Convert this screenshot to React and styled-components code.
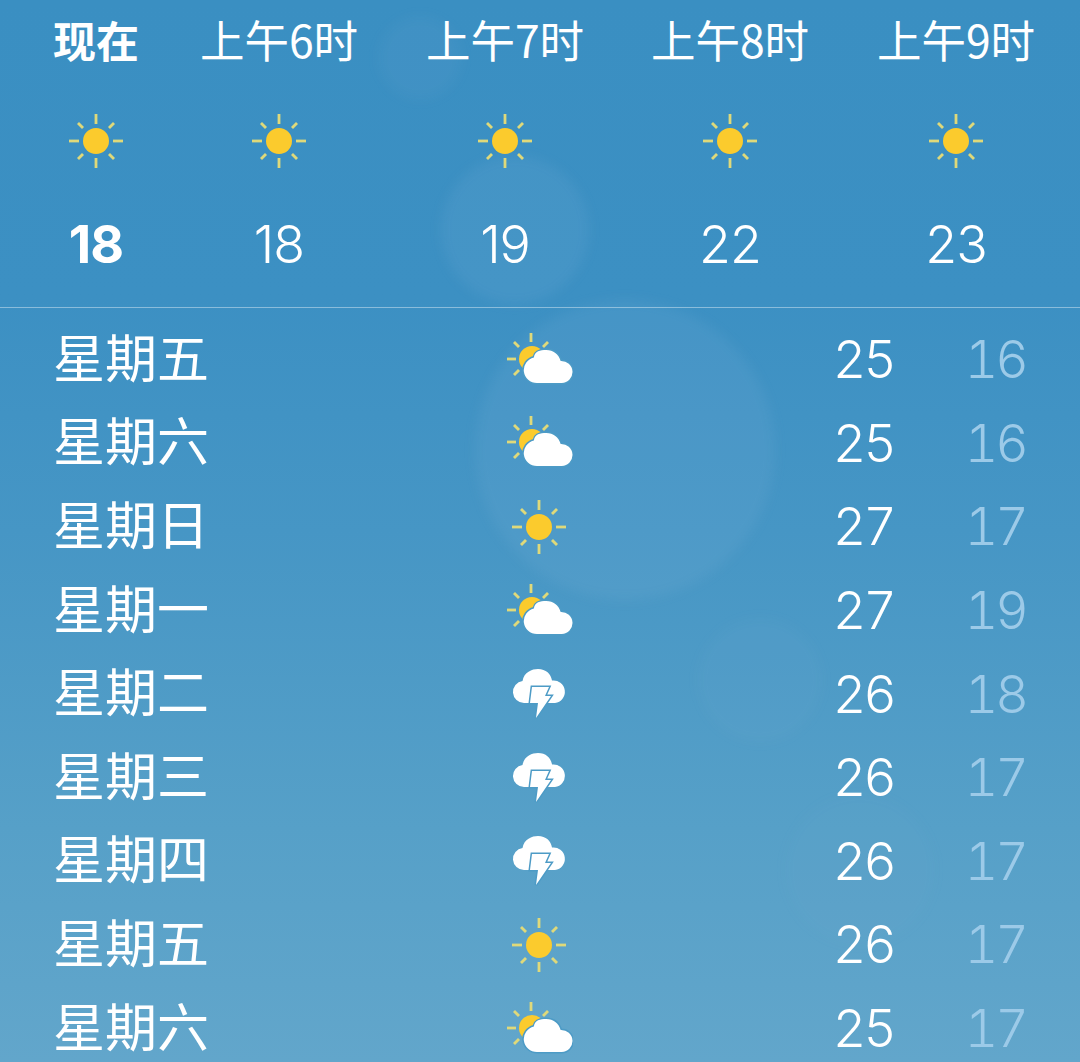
import styled, { createGlobalStyle } from "styled-components";

const GlobalStyle = createGlobalStyle`
  html, body {
    margin: 0;
    padding: 0;
  }
`;

const bg = "#4d9bc6";

const Page = styled.div`
  position: relative;
  width: 1080px;
  height: 1062px;
  overflow: hidden;
  color: #fff;
  font-family: "Noto Sans CJK SC", "Noto Sans", sans-serif;
  background: linear-gradient(180deg, #3a8fc2 0%, #3c90c3 28%, #4696c5 50%, #56a0c8 78%, #62a6cb 100%);
`;

const Bokeh = styled.div`
  position: absolute;
  left: ${(p) => p.$x - p.$r}px;
  top: ${(p) => p.$y - p.$r}px;
  width: ${(p) => p.$r * 2}px;
  height: ${(p) => p.$r * 2}px;
  border-radius: 50%;
  background: rgba(170, 205, 235, ${(p) => p.$a});
  filter: blur(6px);
`;

const Hourly = styled.section`
  position: relative;
  display: grid;
  grid-template-columns: 100px 266px 186px 264px 188px;
  height: 308px;
  padding-left: 46px;
  box-sizing: border-box;
  border-bottom: 1px solid rgba(255, 255, 255, 0.4);
`;

const Hour = styled.div`
  display: flex;
  flex-direction: column;
  align-items: center;
`;

const HourLabel = styled.div`
  height: 84px;
  line-height: 78px;
  white-space: nowrap;
  font-size: ${(p) => (p.$now ? 43 : 44.5)}px;
  font-weight: ${(p) => (p.$now ? 700 : 400)};
`;

const Digits = styled.div`
  font-family: Inter, Roboto, "Liberation Sans", sans-serif;
  font-size: 52px;
  font-weight: ${(p) => (p.$now ? 700 : 350)};
`;

const HourTemp = styled(Digits)`
  margin-top: 44px;
  height: 60px;
  line-height: 60px;
  letter-spacing: -1px;
`;

const IconSlot = styled.div`
  margin-top: 27px;
  width: 68px;
  height: 60px;
`;

const Daily = styled.section`
  position: relative;
  padding: 10px 54px 0 55px;
`;

const DayRow = styled.div`
  display: grid;
  grid-template-columns: 450px 68px 321px 132px;
  align-items: center;
  height: 83.6px;
`;

const DayName = styled.div`
  font-size: 52px;
  line-height: 62px;
  margin: -8px 0 0 -2px;
  font-weight: 400;
  white-space: nowrap;
`;

const Temp = styled(Digits)`
  text-align: right;
  font-variant-numeric: tabular-nums;
  letter-spacing: -3px;
  color: ${(p) => (p.$low ? "#9ccae8" : "#fff")};
`;

const Rays = ({ cx, cy, list }) => (
  <g stroke="#dfd97a" strokeWidth="2.8">
    {list.map(([x1, y1, x2, y2], i) => (
      <line key={i} x1={cx + x1} y1={cy + y1} x2={cx + x2} y2={cy + y2} />
    ))}
  </g>
);

const SunIcon = () => (
  <svg width="68" height="60" viewBox="0 0 68 60">
    <Rays
      cx={34}
      cy={30}
      list={[
        [0, -27, 0, -17],
        [0, 17, 0, 27],
        [-27, 0, -17, 0],
        [17, 0, 27, 0],
        [-18, -18, -13, -13],
        [18, -18, 13, -13],
        [-18, 18, -13, 13],
        [18, 18, 13, 13],
      ]}
    />
    <circle cx="34" cy="30" r="13" fill="#fbcb2d" />
  </svg>
);

const PartlyCloudyIcon = () => (
  <svg width="68" height="60" viewBox="0 0 68 60">
    <Rays
      cx={26}
      cy={29}
      list={[
        [0, -26, 0, -17],
        [-24, 0, -15, 0],
        [-17, -17, -12, -12],
        [17, -17, 12, -12],
        [-17, 16, -12, 11],
      ]}
    />
    <circle cx="27" cy="29" r="13" fill="#fbcb2d" />
    <path
      d="M32 53a13 13 0 0 1-3-25.6C30 21 35 20 41 20c7 0 12 4 14 11a11 11 0 0 1 1 22Z"
      transform="translate(-1 0) scale(1.03 1)"
      fill="#fff"
      stroke={bg}
      strokeWidth="3"
      paintOrder="stroke"
    />
  </svg>
);

const ThunderIcon = () => (
  <svg width="68" height="60" viewBox="0 0 68 60">
    <path
      d="M19 39a11 11 0 0 1-1.5-21.9C19 8 27 5 33 5c8 0 13 5 14 11.5A11.2 11.2 0 0 1 50 39Z"
      fill="#fff"
    />
    <path
      d="M27 23H44L40 32H46L31 54 33 39H25Z"
      fill="#fff"
      stroke={bg}
      strokeWidth="3"
      paintOrder="stroke"
    />
  </svg>
);

const icons = { sun: SunIcon, partly: PartlyCloudyIcon, thunder: ThunderIcon };

const hours = [
  { label: "现在", temp: 18, now: true },
  { label: "上午6时", temp: 18 },
  { label: "上午7时", temp: 19 },
  { label: "上午8时", temp: 22 },
  { label: "上午9时", temp: 23 },
];

const days = [
  { name: "星期五", icon: "partly", high: 25, low: 16 },
  { name: "星期六", icon: "partly", high: 25, low: 16 },
  { name: "星期日", icon: "sun", high: 27, low: 17 },
  { name: "星期一", icon: "partly", high: 27, low: 19 },
  { name: "星期二", icon: "thunder", high: 26, low: 18 },
  { name: "星期三", icon: "thunder", high: 26, low: 17 },
  { name: "星期四", icon: "thunder", high: 26, low: 17 },
  { name: "星期五", icon: "sun", high: 26, low: 17 },
  { name: "星期六", icon: "partly", high: 25, low: 17 },
];

const spots = [
  { x: 420, y: 58, r: 42, a: 0.05 },
  { x: 515, y: 230, r: 74, a: 0.09 },
  { x: 625, y: 450, r: 150, a: 0.09 },
  { x: 760, y: 680, r: 62, a: 0.04 },
  { x: 860, y: 870, r: 75, a: 0.03 },
];

const App = () => (
  <Page>
    <GlobalStyle />
    {spots.map((s, i) => (
      <Bokeh key={i} $x={s.x} $y={s.y} $r={s.r} $a={s.a} />
    ))}
    <Hourly>
      {hours.map((h) => (
        <Hour key={h.label}>
          <HourLabel $now={h.now}>{h.label}</HourLabel>
          <IconSlot>
            <SunIcon />
          </IconSlot>
          <HourTemp $now={h.now}>{h.temp}</HourTemp>
        </Hour>
      ))}
    </Hourly>
    <Daily>
      {days.map((d, i) => {
        const Icon = icons[d.icon];
        return (
          <DayRow key={i}>
            <DayName>{d.name}</DayName>
            <Icon />
            <Temp>{d.high}</Temp>
            <Temp $low>{d.low}</Temp>
          </DayRow>
        );
      })}
    </Daily>
  </Page>
);

export default App;
